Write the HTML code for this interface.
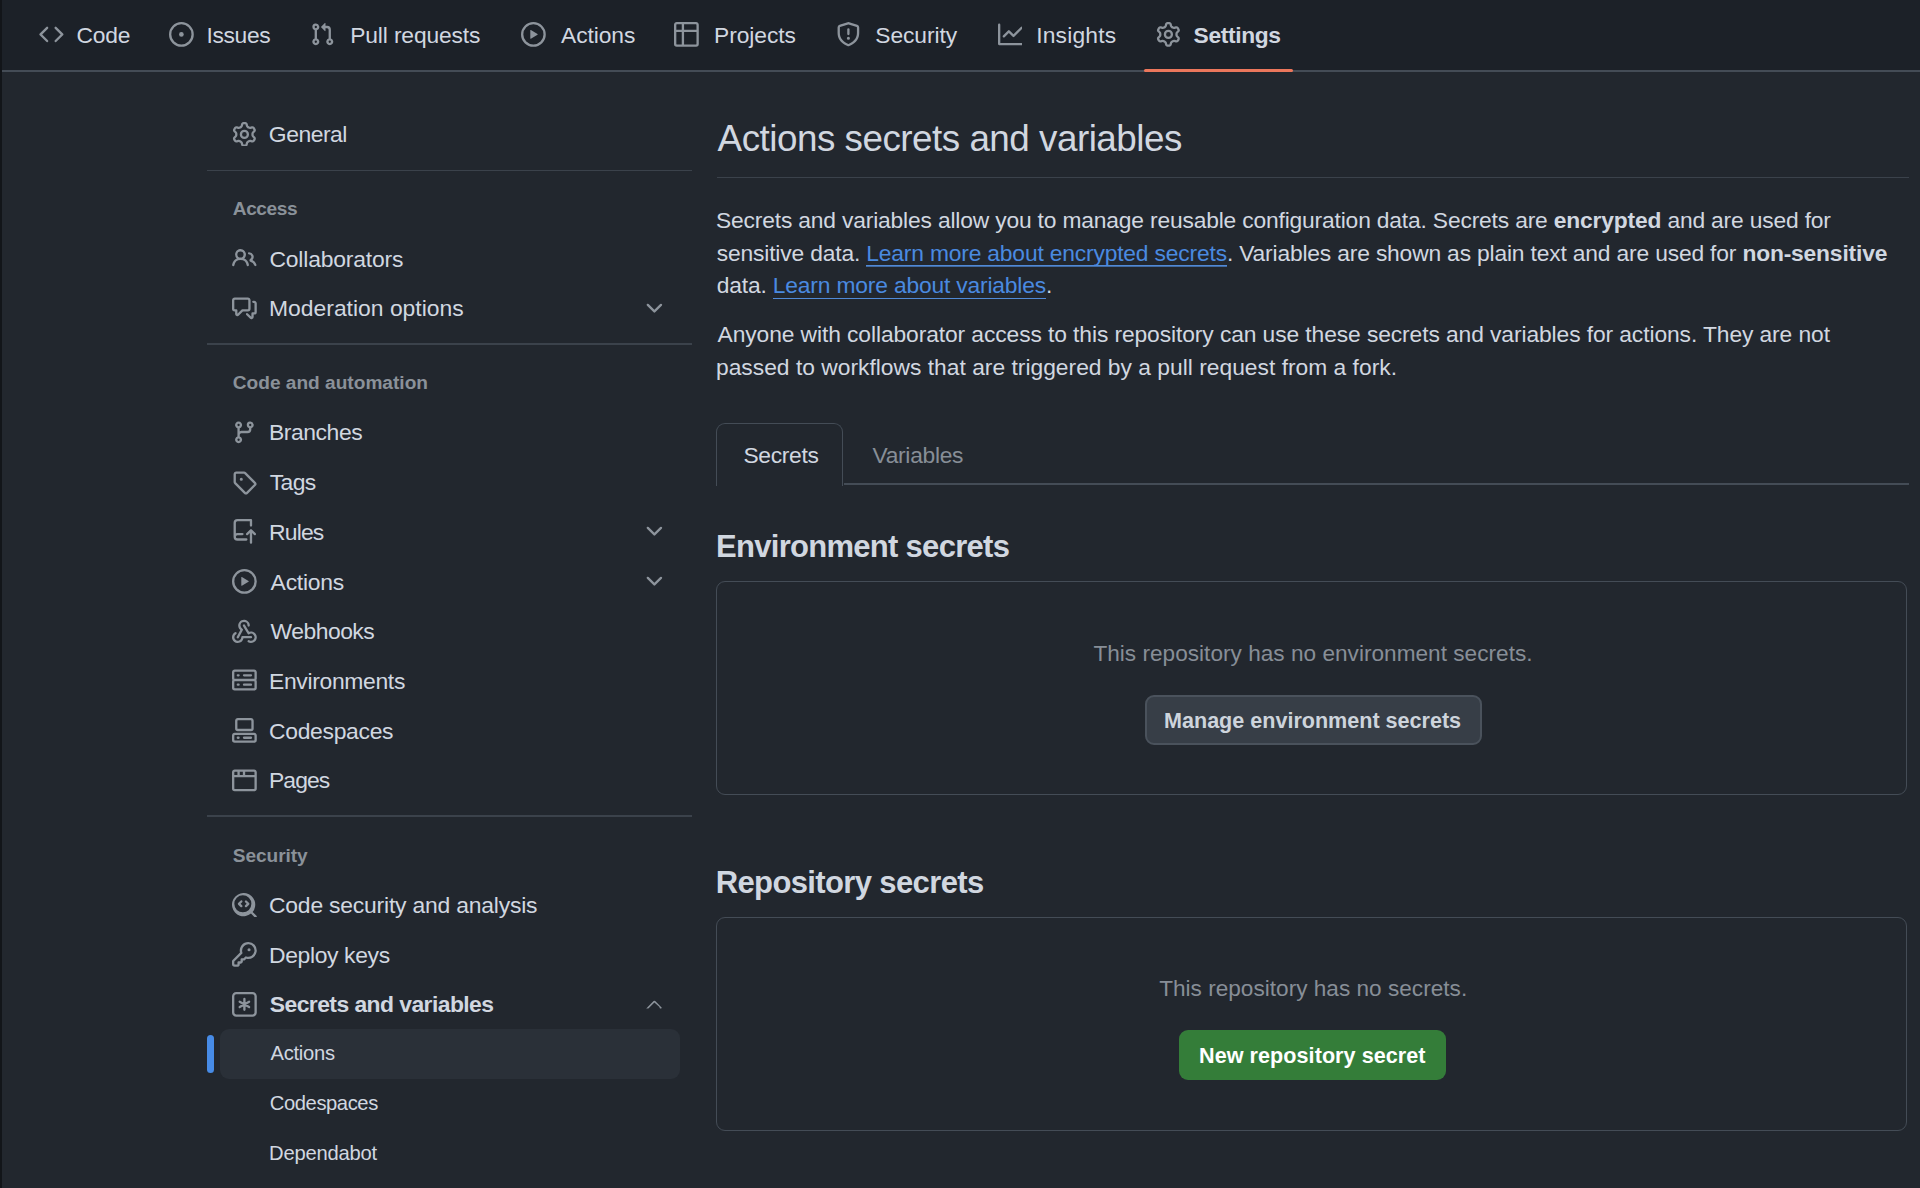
<!DOCTYPE html>
<html><head><meta charset="utf-8"><style>
html,body{margin:0;padding:0;}
body{width:1920px;height:1188px;overflow:hidden;position:relative;background:#22272e;font-family:"Liberation Sans",sans-serif;}
.t{position:absolute;white-space:nowrap;line-height:1;}
svg{display:block}
</style></head><body>
<div style="position:absolute;left:0px;top:0px;width:1920px;height:70px;background:#1c2128;"></div>
<div style="position:absolute;left:0px;top:70px;width:1920px;height:2px;background:#444c56;"></div>
<svg style="position:absolute;left:39.00px;top:22.20px;color:#8d949c" width="24.8" height="24.8" viewBox="0 0 16 16" fill="currentColor"><path d="m11.28 3.22 4.25 4.25a.75.75 0 0 1 0 1.06l-4.25 4.25a.749.749 0 0 1-1.275-.326.749.749 0 0 1 .215-.734L13.94 8l-3.72-3.72a.749.749 0 0 1 .326-1.275.749.749 0 0 1 .734.215Zm-6.56 0a.751.751 0 0 1 1.042.018.751.751 0 0 1 .018 1.042L2.060 8l3.72 3.72a.749.749 0 0 1-.326 1.275.749.749 0 0 1-.734-.215L.47 8.53a.75.75 0 0 1 0-1.06Z"/></svg>
<div class="t" style="left:76.50px;top:24.30px;font-size:22.8px;color:#d1d7e0;font-weight:400;letter-spacing:-0.15px;">Code</div>
<svg style="position:absolute;left:168.75px;top:22.20px;color:#8d949c" width="24.8" height="24.8" viewBox="0 0 16 16" fill="currentColor"><path d="M8 9.5a1.5 1.5 0 1 0 0-3 1.5 1.5 0 0 0 0 3Z"/><path d="M8 0a8 8 0 1 1 0 16A8 8 0 0 1 8 0ZM1.5 8a6.5 6.5 0 1 0 13 0 6.5 6.5 0 0 0-13 0Z"/></svg>
<div class="t" style="left:206.44px;top:24.30px;font-size:22.8px;color:#d1d7e0;font-weight:400;letter-spacing:-0.324px;">Issues</div>
<svg style="position:absolute;left:309.60px;top:22.20px;color:#8d949c" width="24.8" height="24.8" viewBox="0 0 16 16" fill="currentColor"><path d="M1.5 3.25a2.25 2.25 0 1 1 3 2.122v5.256a2.251 2.251 0 1 1-1.5 0V5.372A2.25 2.25 0 0 1 1.5 3.25Zm5.677-.177L9.573.677A.25.25 0 0 1 10 .854V2.5h1A2.5 2.5 0 0 1 13.5 5v5.628a2.251 2.251 0 1 1-1.5 0V5a1 1 0 0 0-1-1h-1v1.646a.25.25 0 0 1-.427.177L7.177 3.427a.25.25 0 0 1 0-.354ZM3.75 2.5a.75.75 0 1 0 0 1.5.75.75 0 0 0 0-1.5Zm0 9.5a.75.75 0 1 0 0 1.5.75.75 0 0 0 0-1.5Zm8.25.75a.75.75 0 1 0 1.5 0 .75.75 0 0 0-1.5 0Z"/></svg>
<div class="t" style="left:350.22px;top:24.30px;font-size:22.8px;color:#d1d7e0;font-weight:400;letter-spacing:-0.135px;">Pull requests</div>
<svg style="position:absolute;left:520.80px;top:22.20px;color:#8d949c" width="24.8" height="24.8" viewBox="0 0 16 16" fill="currentColor"><path d="M8 0a8 8 0 1 1 0 16A8 8 0 0 1 8 0ZM1.5 8a6.5 6.5 0 1 0 13 0 6.5 6.5 0 0 0-13 0Zm4.879-2.773 4.264 2.559a.25.25 0 0 1 0 .428l-4.264 2.559A.25.25 0 0 1 6 10.559V5.442a.25.25 0 0 1 .379-.215Z"/></svg>
<div class="t" style="left:561.08px;top:24.30px;font-size:22.8px;color:#d1d7e0;font-weight:400;letter-spacing:-0.09px;">Actions</div>
<svg style="position:absolute;left:674.30px;top:22.20px;color:#8d949c" width="24.8" height="24.8" viewBox="0 0 16 16" fill="currentColor"><path d="M0 1.75C0 .784.784 0 1.75 0h12.5C15.216 0 16 .784 16 1.75v12.5A1.75 1.75 0 0 1 14.25 16H1.75A1.75 1.75 0 0 1 0 14.25ZM6.5 6.5v8h7.75a.25.25 0 0 0 .25-.25V6.5Zm8-1.5V1.75a.25.25 0 0 0-.25-.25H6.5V5Zm-13 1.5v7.75c0 .138.112.25.25.25H5v-8ZM5 5V1.5H1.75a.25.25 0 0 0-.25.25V5Z"/></svg>
<div class="t" style="left:714.00px;top:24.30px;font-size:22.8px;color:#d1d7e0;font-weight:400;letter-spacing:-0.0511px;">Projects</div>
<svg style="position:absolute;left:836.30px;top:22.20px;color:#8d949c" width="24.8" height="24.8" viewBox="0 0 16 16" fill="currentColor"><path d="M7.467.133a1.748 1.748 0 0 1 1.066 0l5.25 1.68A1.75 1.75 0 0 1 15 3.48V7c0 1.566-.32 3.182-1.303 4.682-.983 1.498-2.585 2.813-5.032 3.855a1.697 1.697 0 0 1-1.33 0c-2.447-1.042-4.049-2.357-5.032-3.855C1.32 10.182 1 8.566 1 7V3.48a1.755 1.755 0 0 1 1.217-1.667Zm.61 1.429a.25.25 0 0 0-.153 0l-5.25 1.68a.25.25 0 0 0-.174.238V7c0 1.358.275 2.666 1.057 3.86.784 1.194 2.121 2.340 4.366 3.297a.196.196 0 0 0 .154 0c2.245-.956 3.582-2.104 4.366-3.298C13.225 9.666 13.5 8.36 13.5 7V3.48a.251.251 0 0 0-.174-.237l-5.25-1.68ZM8.75 4.75v3a.75.75 0 0 1-1.5 0v-3a.75.75 0 0 1 1.5 0ZM9 10.5a1 1 0 1 1-2 0 1 1 0 0 1 2 0Z"/></svg>
<div class="t" style="left:875.28px;top:24.30px;font-size:22.8px;color:#d1d7e0;font-weight:400;letter-spacing:-0.0773px;">Security</div>
<svg style="position:absolute;left:997.50px;top:22.20px;color:#8d949c" width="24.8" height="24.8" viewBox="0 0 16 16" fill="currentColor"><path d="M1.5 1.75V13.5h13.75a.75.75 0 0 1 0 1.5H.75a.75.75 0 0 1-.75-.75V1.75a.75.75 0 0 1 1.5 0Zm14.28 2.53-5.25 5.25a.75.75 0 0 1-1.06 0L7 7.06 4.28 9.78a.751.751 0 0 1-1.042-.018.751.751 0 0 1-.018-1.042l3.25-3.25a.75.75 0 0 1 1.06 0L10 7.94l4.72-4.72a.751.751 0 0 1 1.042.018.751.751 0 0 1 .018 1.042Z"/></svg>
<div class="t" style="left:1036.20px;top:24.30px;font-size:22.8px;color:#d1d7e0;font-weight:400;letter-spacing:0.2062px;">Insights</div>
<svg style="position:absolute;left:1156.10px;top:22.20px;color:#8d949c" width="24.8" height="24.8" viewBox="0 0 16 16" fill="currentColor"><path d="M8 0a8.2 8.2 0 0 1 .701.031C9.444.095 9.99.645 10.16 1.29l.288 1.107c.018.066.079.158.212.224.231.114.454.243.668.386.123.082.233.09.299.071l1.103-.303c.644-.176 1.392.021 1.82.63.27.385.506.792.704 1.218.315.675.111 1.422-.364 1.891l-.814.806c-.049.048-.098.147-.088.294.016.257.016.515 0 .772-.01.147.038.246.088.294l.814.806c.475.469.679 1.216.364 1.891a7.977 7.977 0 0 1-.704 1.217c-.428.61-1.176.807-1.82.63l-1.102-.302c-.067-.019-.177-.011-.3.071a5.909 5.909 0 0 1-.668.386c-.133.066-.194.158-.211.224l-.29 1.106c-.168.646-.715 1.196-1.458 1.26a8.006 8.006 0 0 1-1.402 0c-.743-.064-1.289-.614-1.458-1.26l-.289-1.106c-.018-.066-.079-.158-.212-.224a5.738 5.738 0 0 1-.668-.386c-.123-.082-.233-.09-.299-.071l-1.103.303c-.644.176-1.392-.021-1.82-.63a8.12 8.12 0 0 1-.704-1.218c-.315-.675-.111-1.422.363-1.891l.815-.806c.05-.048.098-.147.088-.294a6.214 6.214 0 0 1 0-.772c.01-.147-.038-.246-.088-.294l-.815-.806C.635 6.045.431 5.298.746 4.623a7.92 7.920 0 0 1 .704-1.217c.428-.61 1.176-.807 1.820-.63l1.102.302c.067.019.177.011.3-.071.214-.143.437-.272.668-.386.133-.066.194-.158.211-.224l.29-1.106C6.009.645 6.556.095 7.299.03 7.53.01 7.764 0 8 0Zm-.571 1.525c-.036.003-.108.036-.137.146l-.289 1.105c-.147.561-.549.967-.998 1.189-.173.086-.34.183-.5.29-.417.278-.97.423-1.529.27l-1.103-.303c-.109-.03-.175.016-.195.045-.22.312-.412.644-.573.99-.014.031-.021.11.059.19l.815.806c.411.406.562.957.53 1.456a4.709 4.709 0 0 0 0 .582c.032.499-.119 1.05-.53 1.456l-.815.806c-.081.08-.073.159-.059.19.162.346.353.677.573.989.02.03.085.076.195.046l1.102-.303c.56-.153 1.113-.008 1.53.27.161.107.328.204.501.29.447.222.85.629.997 1.189l.289 1.105c.029.109.101.143.137.146a6.6 6.6 0 0 0 1.142 0c.036-.003.108-.036.137-.146l.289-1.105c.147-.561.549-.967.998-1.189.173-.086.34-.183.5-.29.417-.278.97-.423 1.529-.27l1.103.303c.109.029.175-.016.195-.045.22-.313.411-.644.573-.99.014-.031.021-.11-.059-.19l-.815-.806c-.411-.406-.562-.957-.53-1.456a4.709 4.709 0 0 0 0-.582c-.032-.499.119-1.05.53-1.456l.815-.806c.081-.08.073-.159.059-.19a6.464 6.464 0 0 0-.573-.989c-.02-.03-.085-.076-.195-.046l-1.102.303c-.56.153-1.113.008-1.53-.27a4.44 4.44 0 0 0-.501-.29c-.447-.222-.85-.629-.997-1.189l-.289-1.105c-.029-.11-.101-.143-.137-.146a6.6 6.6 0 0 0-1.142 0ZM11 8a3 3 0 1 1-6 0 3 3 0 0 1 6 0ZM9.5 8a1.5 1.5 0 1 0-3.001.001A1.5 1.5 0 0 0 9.5 8Z"/></svg>
<div class="t" style="left:1193.54px;top:24.30px;font-size:22.8px;color:#d1d7e0;font-weight:700;letter-spacing:-0.3543px;">Settings</div>
<div style="position:absolute;left:1144px;top:69px;width:149px;height:3px;background:#ec775c;border-radius:2px"></div>
<svg style="position:absolute;left:231.90px;top:121.60px;color:#8d949c" width="24.8" height="24.8" viewBox="0 0 16 16" fill="currentColor"><path d="M8 0a8.2 8.2 0 0 1 .701.031C9.444.095 9.99.645 10.16 1.29l.288 1.107c.018.066.079.158.212.224.231.114.454.243.668.386.123.082.233.09.299.071l1.103-.303c.644-.176 1.392.021 1.82.63.27.385.506.792.704 1.218.315.675.111 1.422-.364 1.891l-.814.806c-.049.048-.098.147-.088.294.016.257.016.515 0 .772-.01.147.038.246.088.294l.814.806c.475.469.679 1.216.364 1.891a7.977 7.977 0 0 1-.704 1.217c-.428.61-1.176.807-1.82.63l-1.102-.302c-.067-.019-.177-.011-.3.071a5.909 5.909 0 0 1-.668.386c-.133.066-.194.158-.211.224l-.29 1.106c-.168.646-.715 1.196-1.458 1.26a8.006 8.006 0 0 1-1.402 0c-.743-.064-1.289-.614-1.458-1.26l-.289-1.106c-.018-.066-.079-.158-.212-.224a5.738 5.738 0 0 1-.668-.386c-.123-.082-.233-.09-.299-.071l-1.103.303c-.644.176-1.392-.021-1.82-.63a8.12 8.12 0 0 1-.704-1.218c-.315-.675-.111-1.422.363-1.891l.815-.806c.05-.048.098-.147.088-.294a6.214 6.214 0 0 1 0-.772c.01-.147-.038-.246-.088-.294l-.815-.806C.635 6.045.431 5.298.746 4.623a7.92 7.920 0 0 1 .704-1.217c.428-.61 1.176-.807 1.820-.63l1.102.302c.067.019.177.011.3-.071.214-.143.437-.272.668-.386.133-.066.194-.158.211-.224l.29-1.106C6.009.645 6.556.095 7.299.03 7.53.01 7.764 0 8 0Zm-.571 1.525c-.036.003-.108.036-.137.146l-.289 1.105c-.147.561-.549.967-.998 1.189-.173.086-.34.183-.5.29-.417.278-.97.423-1.529.27l-1.103-.303c-.109-.03-.175.016-.195.045-.22.312-.412.644-.573.99-.014.031-.021.11.059.19l.815.806c.411.406.562.957.53 1.456a4.709 4.709 0 0 0 0 .582c.032.499-.119 1.05-.53 1.456l-.815.806c-.081.08-.073.159-.059.19.162.346.353.677.573.989.02.03.085.076.195.046l1.102-.303c.56-.153 1.113-.008 1.53.27.161.107.328.204.501.29.447.222.85.629.997 1.189l.289 1.105c.029.109.101.143.137.146a6.6 6.6 0 0 0 1.142 0c.036-.003.108-.036.137-.146l.289-1.105c.147-.561.549-.967.998-1.189.173-.086.34-.183.5-.29.417-.278.97-.423 1.529-.27l1.103.303c.109.029.175-.016.195-.045.22-.313.411-.644.573-.99.014-.031.021-.11-.059-.19l-.815-.806c-.411-.406-.562-.957-.53-1.456a4.709 4.709 0 0 0 0-.582c-.032-.499.119-1.05.53-1.456l.815-.806c.081-.08.073-.159.059-.19a6.464 6.464 0 0 0-.573-.989c-.02-.03-.085-.076-.195-.046l-1.102.303c-.56.153-1.113.008-1.53-.27a4.44 4.44 0 0 0-.501-.29c-.447-.222-.85-.629-.997-1.189l-.289-1.105c-.029-.11-.101-.143-.137-.146a6.6 6.6 0 0 0-1.142 0ZM11 8a3 3 0 1 1-6 0 3 3 0 0 1 6 0ZM9.5 8a1.5 1.5 0 1 0-3.001.001A1.5 1.5 0 0 0 9.5 8Z"/></svg>
<div class="t" style="left:268.84px;top:123.32px;font-size:22.9px;color:#d1d7e0;font-weight:400;letter-spacing:-0.48px;">General</div>
<div style="position:absolute;left:207px;top:169.8px;width:485px;height:1.6999999999999886px;background:#3b424b;"></div>
<div class="t" style="left:232.80px;top:199.23px;font-size:19.1px;color:#8a9199;font-weight:700;letter-spacing:-0.416px;">Access</div>
<svg style="position:absolute;left:231.90px;top:246.20px;color:#8d949c" width="24.8" height="24.8" viewBox="0 0 16 16" fill="currentColor"><path d="M2 5.5a3.5 3.5 0 1 1 5.898 2.549 5.508 5.508 0 0 1 3.034 4.084.75.75 0 1 1-1.482.235 4 4 0 0 0-7.9 0 .75.75 0 0 1-1.482-.236A5.507 5.507 0 0 1 3.102 8.05 3.493 3.493 0 0 1 2 5.5ZM11 4a3.001 3.001 0 0 1 2.22 5.018 5.01 5.01 0 0 1 2.56 3.012.749.749 0 0 1-.885.954.752.752 0 0 1-.549-.514 3.507 3.507 0 0 0-2.522-2.372.75.75 0 0 1-.574-.73v-.352a.75.75 0 0 1 .416-.672A1.5 1.5 0 0 0 11 5.5.75.75 0 0 1 11 4Zm-5.5-.5a2 2 0 1 0-.001 3.999A2 2 0 0 0 5.5 3.5Z"/></svg>
<div class="t" style="left:269.48px;top:247.62px;font-size:22.9px;color:#d1d7e0;font-weight:400;letter-spacing:-0.18px;">Collaborators</div>
<svg style="position:absolute;left:231.90px;top:295.50px;color:#8d949c" width="24.8" height="24.8" viewBox="0 0 16 16" fill="currentColor"><path d="M1.75 1h8.5c.966 0 1.75.784 1.75 1.75v5.5A1.75 1.75 0 0 1 10.25 10H7.061l-2.574 2.573A1.458 1.458 0 0 1 2 11.543V10h-.25A1.75 1.75 0 0 1 0 8.25v-5.5C0 1.784.784 1 1.75 1ZM1.5 2.750v5.5c0 .138.112.25.25.25h1a.75.75 0 0 1 .75.75v2.19l2.72-2.72a.749.749 0 0 1 .53-.22h3.5a.25.25 0 0 0 .25-.25v-5.5a.25.25 0 0 0-.25-.25h-8.5a.25.25 0 0 0-.25.25Zm13 2a.25.25 0 0 0-.25-.25h-.5a.75.75 0 0 1 0-1.5h.5c.966 0 1.75.784 1.75 1.75v5.5A1.75 1.75 0 0 1 14.25 12H14v1.543a1.458 1.458 0 0 1-2.487 1.03L9.22 12.28a.749.749 0 0 1 .326-1.275.749.749 0 0 1 .734.215l2.22 2.22v-2.19a.75.75 0 0 1 .75-.75h1a.25.25 0 0 0 .25-.25Z"/></svg>
<div class="t" style="left:269.00px;top:297.22px;font-size:22.9px;color:#d1d7e0;font-weight:400;letter-spacing:0.0px;">Moderation options</div>
<svg style="position:absolute;left:641.70px;top:295.50px;color:#8d949c" width="24.8" height="24.8" viewBox="0 0 16 16" fill="currentColor"><path d="M12.78 5.22a.749.749 0 0 1 0 1.06l-4.25 4.25a.749.749 0 0 1-1.06 0L3.22 6.28a.749.749 0 0 1 .326-1.275.749.749 0 0 1 .734.215L8 8.939l3.72-3.719a.749.749 0 0 1 1.06 0Z"/></svg>
<div style="position:absolute;left:207px;top:343.2px;width:485px;height:1.6999999999999886px;background:#3b424b;"></div>
<div class="t" style="left:232.80px;top:372.93px;font-size:19.1px;color:#8a9199;font-weight:700;letter-spacing:0.0px;">Code and automation</div>
<svg style="position:absolute;left:231.90px;top:420.10px;color:#8d949c" width="24.8" height="24.8" viewBox="0 0 16 16" fill="currentColor"><path d="M9.5 3.25a2.25 2.25 0 1 1 3 2.122V6A2.5 2.5 0 0 1 10 8.5H6a1 1 0 0 0-1 1v1.128a2.251 2.251 0 1 1-1.5 0V5.372a2.25 2.25 0 1 1 1.5 0v1.836A2.493 2.493 0 0 1 6 7h4a1 1 0 0 0 1-1v-.628A2.25 2.25 0 0 1 9.5 3.25Zm-6 0a.75.75 0 1 0 1.5 0 .75.75 0 0 0-1.5 0Zm8.25-.75a.75.75 0 1 0 0 1.5.75.75 0 0 0 0-1.5ZM4.25 12a.75.75 0 1 0 0 1.5.75.75 0 0 0 0-1.5Z"/></svg>
<div class="t" style="left:269.00px;top:421.42px;font-size:22.9px;color:#d1d7e0;font-weight:400;letter-spacing:-0.4368px;">Branches</div>
<svg style="position:absolute;left:231.90px;top:469.77px;color:#8d949c" width="24.8" height="24.8" viewBox="0 0 16 16" fill="currentColor"><path d="M1 7.775V2.75C1 1.784 1.784 1 2.75 1h5.025c.464 0 .91.184 1.238.513l6.25 6.25a1.75 1.75 0 0 1 0 2.474l-5.026 5.026a1.75 1.75 0 0 1-2.474 0l-6.25-6.25A1.752 1.752 0 0 1 1 7.775Zm1.5 0c0 .066.026.13.073.177l6.25 6.25a.25.25 0 0 0 .354 0l5.025-5.025a.25.25 0 0 0 0-.354l-6.25-6.25a.25.25 0 0 0-.177-.073H2.75a.25.25 0 0 0-.25.25ZM6 5a1 1 0 1 1 0 2 1 1 0 0 1 0-2Z"/></svg>
<div class="t" style="left:269.80px;top:471.49px;font-size:22.9px;color:#d1d7e0;font-weight:400;letter-spacing:-0.66px;">Tags</div>
<svg style="position:absolute;left:231.90px;top:519.44px;color:#8d949c" width="24.8" height="24.8" viewBox="0 0 16 16" fill="currentColor"><path d="M1 2.5A2.5 2.5 0 0 1 3.5 0h8.75a.75.75 0 0 1 .75.75v3.5a.75.75 0 0 1-1.5 0V1.5h-8a1 1 0 0 0-1 1v6.708A2.493 2.493 0 0 1 3.5 9h3.25a.75.75 0 0 1 0 1.5H3.5a1 1 0 0 0 0 2h5.75a.75.75 0 0 1 0 1.5H3.5A2.5 2.5 0 0 1 1 11.5Zm13.23 7.79h-.001l-1.224-1.224v6.184a.75.75 0 0 1-1.5 0V9.066L10.28 10.29a.75.75 0 0 1-1.06-1.061l2.505-2.504a.75.75 0 0 1 1.06 0L15.29 9.23a.751.751 0 0 1-.018 1.042.751.751 0 0 1-1.042.018Z"/></svg>
<div class="t" style="left:269.00px;top:521.16px;font-size:22.9px;color:#d1d7e0;font-weight:400;letter-spacing:-0.81px;">Rules</div>
<svg style="position:absolute;left:641.70px;top:519.44px;color:#8d949c" width="24.8" height="24.8" viewBox="0 0 16 16" fill="currentColor"><path d="M12.78 5.22a.749.749 0 0 1 0 1.06l-4.25 4.25a.749.749 0 0 1-1.06 0L3.22 6.28a.749.749 0 0 1 .326-1.275.749.749 0 0 1 .734.215L8 8.939l3.72-3.719a.749.749 0 0 1 1.06 0Z"/></svg>
<svg style="position:absolute;left:231.90px;top:569.11px;color:#8d949c" width="24.8" height="24.8" viewBox="0 0 16 16" fill="currentColor"><path d="M8 0a8 8 0 1 1 0 16A8 8 0 0 1 8 0ZM1.5 8a6.5 6.5 0 1 0 13 0 6.5 6.5 0 0 0-13 0Zm4.879-2.773 4.264 2.559a.25.25 0 0 1 0 .428l-4.264 2.559A.25.25 0 0 1 6 10.559V5.442a.25.25 0 0 1 .379-.215Z"/></svg>
<div class="t" style="left:270.60px;top:570.83px;font-size:22.9px;color:#d1d7e0;font-weight:400;letter-spacing:-0.225px;">Actions</div>
<svg style="position:absolute;left:641.70px;top:569.11px;color:#8d949c" width="24.8" height="24.8" viewBox="0 0 16 16" fill="currentColor"><path d="M12.78 5.22a.749.749 0 0 1 0 1.06l-4.25 4.25a.749.749 0 0 1-1.06 0L3.22 6.28a.749.749 0 0 1 .326-1.275.749.749 0 0 1 .734.215L8 8.939l3.72-3.719a.749.749 0 0 1 1.06 0Z"/></svg>
<svg style="position:absolute;left:231.90px;top:618.78px;color:#8d949c" width="24.8" height="24.8" viewBox="0 0 16 16" fill="currentColor"><path d="M5.5 4.25a2.25 2.25 0 0 1 4.5 0 .75.75 0 0 0 1.5 0 3.75 3.75 0 1 0-6.14 2.889l-2.272 4.258a.75.75 0 0 0 1.324.706L7 7.25a.75.75 0 0 0-.309-1.015A2.25 2.25 0 0 1 5.5 4.25Z"/><path d="M7.364 3.607a.75.75 0 0 1 1.03.257l2.608 4.349a3.75 3.75 0 1 1-.628 6.785.75.75 0 0 1 .752-1.299 2.25 2.25 0 1 0-.033-3.88.75.75 0 0 1-1.03-.256L7.107 4.636a.75.75 0 0 1 .257-1.03Z"/><path d="M2.9 8.776A.75.75 0 0 1 2.625 9.8 2.25 2.25 0 1 0 6 11.75a.75.75 0 0 1 .75-.751h5.5a.75.75 0 0 1 0 1.5H7.425a3.751 3.751 0 1 1-5.55-3.998.75.75 0 0 1 1.024.274Z"/></svg>
<div class="t" style="left:270.60px;top:619.90px;font-size:22.9px;color:#d1d7e0;font-weight:400;letter-spacing:-0.5143px;">Webhooks</div>
<svg style="position:absolute;left:231.90px;top:668.45px;color:#8d949c" width="24.8" height="24.8" viewBox="0 0 16 16" fill="currentColor"><path d="M1.75 1h12.5c.966 0 1.75.784 1.75 1.75v4c0 .372-.116.717-.314 1 .198.283.314.628.314 1v4a1.75 1.75 0 0 1-1.75 1.75H1.75A1.75 1.75 0 0 1 0 12.75v-4c0-.358.109-.707.314-1a1.739 1.739 0 0 1-.314-1v-4C0 1.784.784 1 1.75 1ZM1.5 2.75v4c0 .138.112.25.25.25h12.5a.25.25 0 0 0 .25-.25v-4a.25.25 0 0 0-.25-.25H1.75a.25.25 0 0 0-.25.25Zm.25 5.75a.25.25 0 0 0-.25.25v4c0 .138.112.25.25.25h12.5a.25.25 0 0 0 .25-.25v-4a.25.25 0 0 0-.25-.25ZM7 4.75A.75.75 0 0 1 7.75 4h4.5a.75.75 0 0 1 0 1.5h-4.5A.75.75 0 0 1 7 4.75ZM7.75 10h4.5a.75.75 0 0 1 0 1.5h-4.5a.75.75 0 0 1 0-1.5ZM3 4.75A.75.75 0 0 1 3.75 4h.5a.75.75 0 0 1 0 1.5h-.5A.75.75 0 0 1 3 4.75ZM3.75 10h.5a.75.75 0 0 1 0 1.5h-.5a.75.75 0 0 1 0-1.5Z"/></svg>
<div class="t" style="left:269.00px;top:670.17px;font-size:22.9px;color:#d1d7e0;font-weight:400;letter-spacing:-0.3273px;">Environments</div>
<svg style="position:absolute;left:231.90px;top:718.12px;color:#8d949c" width="24.8" height="24.8" viewBox="0 0 16 16" fill="currentColor"><path d="M0 11.25c0-.966.784-1.75 1.75-1.75h12.5c.966 0 1.75.784 1.75 1.75v3A1.75 1.75 0 0 1 14.25 16H1.75A1.75 1.75 0 0 1 0 14.25Zm2-9.5C2 .784 2.784 0 3.75 0h8.5C13.216 0 14 .784 14 1.75v5a1.75 1.75 0 0 1-1.75 1.75h-8.5A1.75 1.75 0 0 1 2 6.75Zm1.75-.25a.25.25 0 0 0-.25.25v5c0 .138.112.25.25.25h8.5a.25.25 0 0 0 .25-.25v-5a.25.25 0 0 0-.25-.25Zm-2 9.5a.25.25 0 0 0-.25.25v3c0 .138.112.25.25.25h12.5a.25.25 0 0 0 .25-.25v-3a.25.25 0 0 0-.25-.25Z"/><path d="M7 12.75a.75.75 0 0 1 .75-.75h4.5a.75.75 0 0 1 0 1.5h-4.5a.75.75 0 0 1-.75-.75Zm-4 0a.75.75 0 0 1 .75-.75h.5a.75.75 0 0 1 0 1.5h-.5a.75.75 0 0 1-.75-.75Z"/></svg>
<div class="t" style="left:269.00px;top:719.84px;font-size:22.9px;color:#d1d7e0;font-weight:400;letter-spacing:-0.3px;">Codespaces</div>
<svg style="position:absolute;left:231.90px;top:767.79px;color:#8d949c" width="24.8" height="24.8" viewBox="0 0 16 16" fill="currentColor"><path d="M0 2.75C0 1.784.784 1 1.75 1h12.5c.966 0 1.75.784 1.75 1.75v10.5A1.75 1.75 0 0 1 14.25 15H1.75A1.75 1.75 0 0 1 0 13.25ZM14.5 6h-13v7.25c0 .138.112.25.25.25h12.5a.25.25 0 0 0 .25-.25Zm-6-3.5v2h6V2.75a.25.25 0 0 0-.25-.25ZM5 2.5v2h2v-2Zm-3.25 0a.25.25 0 0 0-.25.25V4.5h2v-2Z"/></svg>
<div class="t" style="left:269.00px;top:768.91px;font-size:22.9px;color:#d1d7e0;font-weight:400;letter-spacing:-0.9px;">Pages</div>
<div style="position:absolute;left:207px;top:815.3px;width:485px;height:1.7000000000000455px;background:#3b424b;"></div>
<div class="t" style="left:232.80px;top:845.63px;font-size:19.1px;color:#8a9199;font-weight:700;letter-spacing:-0.0714px;">Security</div>
<svg style="position:absolute;left:231.90px;top:892.60px;color:#8d949c" width="24.8" height="24.8" viewBox="0 0 16 16" fill="currentColor"><path d="M8.47 4.97a.75.75 0 0 1 1.06 0l1.5 1.5a.75.75 0 0 1 0 1.06l-1.5 1.5a.749.749 0 0 1-1.275-.326.749.749 0 0 1 .215-.734L9.44 7 8.47 6.03a.75.75 0 0 1 0-1.06ZM6.53 6.03 5.56 7l.97.97a.749.749 0 0 1-.326 1.275.749.749 0 0 1-.734-.215l-1.5-1.5a.75.75 0 0 1 0-1.06l1.5-1.5a.749.749 0 0 1 1.275.326.749.749 0 0 1-.215.734Z"/><path d="M12.246 13.307a7.501 7.501 0 1 1 1.06-1.06l2.474 2.473a.749.749 0 0 1-.326 1.275.749.749 0 0 1-.734-.215ZM1.5 7a5.5 5.5 0 1 0 11 0 5.5 5.5 0 0 0-11 0Z"/></svg>
<div class="t" style="left:269.00px;top:894.32px;font-size:22.9px;color:#d1d7e0;font-weight:400;letter-spacing:-0.2016px;">Code security and analysis</div>
<svg style="position:absolute;left:231.90px;top:942.27px;color:#8d949c" width="24.8" height="24.8" viewBox="0 0 16 16" fill="currentColor"><path d="M10.5 0a5.499 5.499 0 1 1-1.288 10.848l-.932.932a.749.749 0 0 1-.53.22H7v.75a.749.749 0 0 1-.22.53l-.5.5a.749.749 0 0 1-.53.22H5v.75a.749.749 0 0 1-.22.53l-.5.5a.749.749 0 0 1-.53.22h-2A1.75 1.75 0 0 1 0 14.25v-2c0-.199.079-.389.22-.53l4.932-4.932A5.5 5.5 0 0 1 10.5 0Zm-4 5.5c-.001.431.069.86.205 1.269a.75.75 0 0 1-.181.768L1.5 12.56v1.69c0 .138.112.25.25.25h1.69l.06-.06v-1.19a.75.75 0 0 1 .75-.75h1.19l.06-.06v-1.19a.75.75 0 0 1 .75-.75h1.19l1.023-1.025a.75.75 0 0 1 .768-.18A4 4 0 1 0 6.5 5.5ZM11 6a1 1 0 1 1 0-2 1 1 0 0 1 0 2Z"/></svg>
<div class="t" style="left:269.00px;top:943.99px;font-size:22.9px;color:#d1d7e0;font-weight:400;letter-spacing:-0.36px;">Deploy keys</div>
<svg style="position:absolute;left:231.90px;top:991.94px;color:#8d949c" width="24.8" height="24.8" viewBox="0 0 16 16" fill="currentColor"><path d="M0 2.75A2.75 2.75 0 0 1 2.75 0h10.5A2.75 2.75 0 0 1 16 2.75v10.5A2.75 2.75 0 0 1 13.25 16H2.75A2.75 2.75 0 0 1 0 13.25ZM2.75 1.5c-.69 0-1.25.56-1.25 1.25v10.5c0 .69.56 1.25 1.25 1.25h10.5c.69 0 1.25-.56 1.25-1.25V2.75c0-.69-.56-1.25-1.25-1.25Z"/><g stroke="currentColor" stroke-width="1.5" stroke-linecap="round" fill="none"><path d="M8 4.5v7M4.97 6.25l6.06 3.5M4.97 9.75l6.06-3.5"/></g></svg>
<div class="t" style="left:269.80px;top:992.66px;font-size:22.9px;color:#d1d7e0;font-weight:700;letter-spacing:-0.5598px;">Secrets and variables</div>
<svg style="position:absolute;left:641.70px;top:993.24px;color:#8d949c" width="24.8" height="24.8" viewBox="0 0 16 16" fill="currentColor"><path d="M3.22 10.53a.749.749 0 0 1 0-1.06l4.25-4.25a.749.749 0 0 1 1.06 0l4.25 4.25a.749.749 0 0 1-1.275.326.749.749 0 0 1-.215-.734L8 6.061l-3.72 3.719a.749.749 0 0 1-1.06 0Z"/></svg>
<div style="position:absolute;left:220px;top:1028.8px;width:460px;height:50.200000000000045px;background:#2a3038;border-radius:9px"></div>
<div style="position:absolute;left:207px;top:1035px;width:7px;height:38px;background:#478be6;border-radius:4px"></div>
<div class="t" style="left:270.60px;top:1043.00px;font-size:20.2px;color:#d1d7e0;font-weight:400;letter-spacing:-0.3px;">Actions</div>
<div class="t" style="left:269.80px;top:1092.80px;font-size:20.2px;color:#d1d7e0;font-weight:400;letter-spacing:-0.42px;">Codespaces</div>
<div class="t" style="left:269.00px;top:1142.60px;font-size:20.2px;color:#d1d7e0;font-weight:400;letter-spacing:-0.2px;">Dependabot</div>
<div class="t" style="left:717.60px;top:121.45px;font-size:36.8px;color:#d1d7e0;font-weight:400;letter-spacing:-0.4947px;">Actions secrets and variables</div>
<div style="position:absolute;left:717px;top:176.8px;width:1192px;height:1.6999999999999886px;background:#3b424b;"></div>
<div class="t" style="left:716.00px;top:209.30px;font-size:22.8px;color:#d1d7e0;font-weight:400;letter-spacing:-0.1666px;">Secrets and variables allow you to manage reusable configuration data. Secrets are <b>encrypted</b> and are used for</div>
<div class="t" style="left:716.80px;top:241.80px;font-size:22.8px;color:#d1d7e0;font-weight:400;letter-spacing:-0.1643px;">sensitive data. <span style="color:#4a8ae0;background:linear-gradient(#5089d6,#5089d6) no-repeat 0 100%/100% 1.7px;padding-bottom:1.1px">Learn more about encrypted secrets</span>. Variables are shown as plain text and are used for <b>non-sensitive</b></div>
<div class="t" style="left:716.80px;top:274.30px;font-size:22.8px;color:#d1d7e0;font-weight:400;letter-spacing:-0.1688px;">data. <span style="color:#4a8ae0;background:linear-gradient(#5089d6,#5089d6) no-repeat 0 100%/100% 1.7px;padding-bottom:1.1px">Learn more about variables</span>.</div>
<div class="t" style="left:717.60px;top:323.40px;font-size:22.8px;color:#d1d7e0;font-weight:400;letter-spacing:-0.0893px;">Anyone with collaborator access to this repository can use these secrets and variables for actions. They are not</div>
<div class="t" style="left:716.00px;top:356.20px;font-size:22.8px;color:#d1d7e0;font-weight:400;letter-spacing:0.0082px;">passed to workflows that are triggered by a pull request from a fork.</div>
<div style="position:absolute;left:844px;top:483.2px;width:1065px;height:1.8000000000000114px;background:#444c56;"></div>
<div style="position:absolute;left:716.2px;top:423.1px;width:124.8px;height:62px;border:1.75px solid #444c56;border-bottom:none;border-radius:9px 9px 0 0;background:#22272e"></div>
<div class="t" style="left:743.40px;top:444.30px;font-size:22.8px;color:#d1d7e0;font-weight:400;letter-spacing:-0.3px;">Secrets</div>
<div class="t" style="left:872.48px;top:444.30px;font-size:22.8px;color:#878e97;font-weight:400;letter-spacing:-0.2925px;">Variables</div>
<div class="t" style="left:716.02px;top:531.46px;font-size:31px;color:#d1d7e0;font-weight:700;letter-spacing:-0.71px;">Environment secrets</div>
<div style="position:absolute;left:716.2px;top:581.4px;width:1188.8px;height:212px;border:1.75px solid #444c56;border-radius:9px"></div>
<div class="t" style="left:1093.40px;top:642.57px;font-size:22.6px;color:#878e97;font-weight:400;letter-spacing:0.0214px;">This repository has no environment secrets.</div>
<div style="position:absolute;left:1144.5px;top:695px;width:333px;height:45.5px;border:2px solid #4a525c;border-radius:9px;background:#373e47"></div>
<div class="t" style="left:1164.00px;top:709.72px;font-size:21.6px;color:#cdd4dc;font-weight:700;letter-spacing:-0.02px;">Manage environment secrets</div>
<div class="t" style="left:715.70px;top:866.86px;font-size:31px;color:#d1d7e0;font-weight:700;letter-spacing:-0.6234px;">Repository secrets</div>
<div style="position:absolute;left:716.2px;top:917px;width:1188.8px;height:211.8px;border:1.75px solid #444c56;border-radius:9px"></div>
<div class="t" style="left:1159.16px;top:977.87px;font-size:22.6px;color:#878e97;font-weight:400;letter-spacing:0.012px;">This repository has no secrets.</div>
<div style="position:absolute;left:1179.4px;top:1030.2px;width:266.6px;height:49.4px;border-radius:9px;background:#347d39"></div>
<div class="t" style="left:1199.02px;top:1045.22px;font-size:21.6px;color:#ffffff;font-weight:700;letter-spacing:0.043px;">New repository secret</div>
<div style="position:absolute;left:0px;top:0px;width:2px;height:1188px;background:#121519;"></div>
</body></html>
